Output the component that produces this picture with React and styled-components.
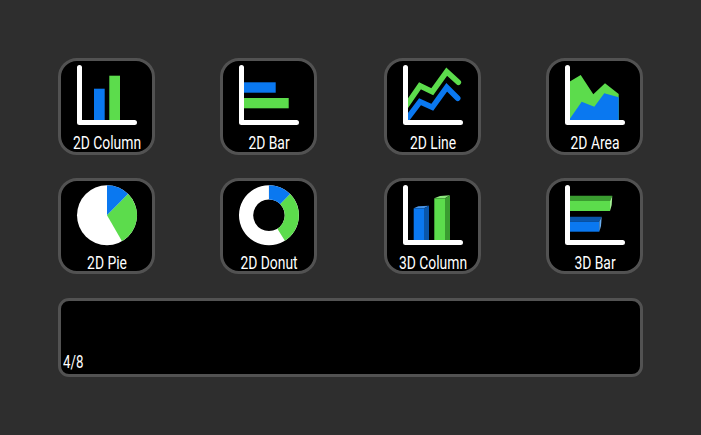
import styled, { createGlobalStyle } from "styled-components";

const BLUE = "#0a78f0";
const GREEN = "#5cdc4c";

const GlobalStyle = createGlobalStyle`
  html, body {
    margin: 0;
    padding: 0;
    background: #2e2e2e;
  }
`;

// wedge of a ring, angles in degrees clockwise from 12 o'clock
function wedge(cx, cy, r, r0, from, to) {
  const pt = (rad, deg) => {
    const a = (deg * Math.PI) / 180;
    return `${(cx + rad * Math.sin(a)).toFixed(2)} ${(cy - rad * Math.cos(a)).toFixed(2)}`;
  };
  const big = to - from > 180 ? 1 : 0;
  if (r0 === 0) return `M${cx} ${cy}L${pt(r, from)}A${r} ${r} 0 ${big} 1 ${pt(r, to)}Z`;
  return `M${pt(r0, from)}L${pt(r, from)}A${r} ${r} 0 ${big} 1 ${pt(r, to)}L${pt(r0, to)}A${r0} ${r0} 0 ${big} 0 ${pt(r0, from)}Z`;
}

const Axis = () => (
  <path d="M21.5 9.5V64.5H76.5" fill="none" stroke="#fff" strokeWidth="5" strokeLinecap="round" strokeLinejoin="round" />
);

const charts = [
  {
    label: "2D Column",
    art: (
      <>
        <rect x="36" y="30.7" width="10.7" height="32" fill={BLUE} />
        <rect x="51.3" y="17.7" width="10.7" height="45" fill={GREEN} />
        <Axis />
      </>
    ),
  },
  {
    label: "2D Bar",
    art: (
      <>
        <rect x="23" y="24.3" width="32.7" height="10.4" fill={BLUE} />
        <rect x="23" y="40" width="45.7" height="10.3" fill={GREEN} />
        <Axis />
      </>
    ),
  },
  {
    label: "2D Line",
    art: (
      <>
        <clipPath id="lineClip">
          <rect x="23" y="0" width="60" height="64" />
        </clipPath>
        <g clipPath="url(#lineClip)" fill="none" strokeWidth="5.6" strokeLinecap="round" strokeLinejoin="miter">
          <path d="M20 51L36 27.7L48.3 33.7L62.7 13.7L74.3 24.3" stroke={GREEN} />
          <path d="M20 65L36 43.7L48.3 49.3L62.7 29.3L73.7 40.3" stroke={BLUE} />
        </g>
        <Axis />
      </>
    ),
  },
  {
    label: "2D Area",
    art: (
      <>
        <path d="M23 24L34.7 17L47.3 36.3L59 25.3L72.7 36V62.5H23Z" fill={GREEN} />
        <path d="M23 62L35.7 43.7L48.3 48.7L58.3 35.3L72.7 39.3V62.5H23Z" fill={BLUE} />
        <Axis />
      </>
    ),
  },
  {
    label: "2D Pie",
    art: (
      <>
        <circle cx="49" cy="37.3" r="30" fill="#fff" />
        <path d={wedge(49, 37.3, 30, 0, 0, 45)} fill={BLUE} />
        <path d={wedge(49, 37.3, 30, 0, 45, 150)} fill={GREEN} />
      </>
    ),
  },
  {
    label: "2D Donut",
    art: (
      <>
        <path d={wedge(49, 37.3, 30, 15.8, 0, 359.9)} fill="#fff" />
        <path d={wedge(49, 37.3, 30, 15.8, 0, 45)} fill={BLUE} />
        <path d={wedge(49, 37.3, 30, 15.8, 45, 148)} fill={GREEN} />
      </>
    ),
  },
  {
    label: "3D Column",
    art: (
      <>
        <path d="M29.7 30.3L34.3 28.3L45 27.7L40 30.3Z" fill="#4a94e6" />
        <rect x="29.7" y="30.3" width="10.3" height="32" fill={BLUE} />
        <path d="M40 30.3L45 27.7V62.3H40Z" fill="#0a56aa" />
        <path d="M50.3 20.3L56 18L66 17.3L61 20.3Z" fill="#8ce87c" />
        <rect x="50.3" y="20.3" width="10.7" height="42" fill={GREEN} />
        <path d="M61 20.3L66 17.3V62.3H61Z" fill="#3a9c30" />
        <Axis />
      </>
    ),
  },
  {
    label: "3D Bar",
    art: (
      <>
        <path d="M23 17.7H66.3L64 23H23Z" fill="#3a9c30" />
        <rect x="23" y="23" width="41" height="10" fill={GREEN} />
        <path d="M64 23L66.3 17.7L65.7 27L64 33Z" fill="#a2f092" />
        <path d="M23 38.7H55.7L53.3 43.7H23Z" fill="#0a56aa" />
        <rect x="23" y="43.7" width="30.3" height="10" fill={BLUE} />
        <path d="M53.3 43.7L55.7 38.7L55 48L53.3 53.7Z" fill="#6aaef0" />
        <Axis />
      </>
    ),
  },
];

export default function App() {
  return (
    <Page>
      <GlobalStyle />
      <Grid>
        {charts.map((chart) => (
          <Tile key={chart.label}>
            <Art viewBox="0 0 97 97">{chart.art}</Art>
            <Label>{chart.label}</Label>
          </Tile>
        ))}
      </Grid>
      <Panel>
        <Counter>4/8</Counter>
      </Panel>
    </Page>
  );
}

const Page = styled.div`
  width: 701px;
  height: 435px;
  box-sizing: border-box;
  padding: 58px 58px 0 58px;
  display: flex;
  flex-direction: column;
  gap: 24px;
  font-family: "Roboto", sans-serif;
  overflow: hidden;
`;

const Grid = styled.div`
  width: 585px;
  display: grid;
  grid-template-columns: 162px 164px 162px 97px;
  grid-template-rows: 97px 96px;
  row-gap: 23px;
`;

const Tile = styled.div`
  position: relative;
  width: 97px;
  background: #000;
  border: 3px solid #525252;
  border-radius: 19px;
  box-sizing: border-box;
`;

const Art = styled.svg`
  position: absolute;
  left: -3px;
  top: -3px;
  width: 97px;
  height: 97px;
`;

const Label = styled.div`
  position: absolute;
  left: -2px;
  right: -3px;
  top: 71px;
  text-align: center;
  color: #fff;
  font-size: 19px;
  line-height: 22px;
  white-space: nowrap;
  transform: scaleX(0.73);
`;

const Panel = styled.div`
  width: 585px;
  height: 79px;
  box-sizing: border-box;
  background: #000;
  border: 3px solid #525252;
  border-radius: 11px;
  display: flex;
  align-items: flex-end;
  padding: 0 0 1px 2px;
`;

const Counter = styled.div`
  color: #fff;
  font-size: 19px;
  line-height: 22px;
  transform: scaleX(0.7);
  transform-origin: left center;
`;
